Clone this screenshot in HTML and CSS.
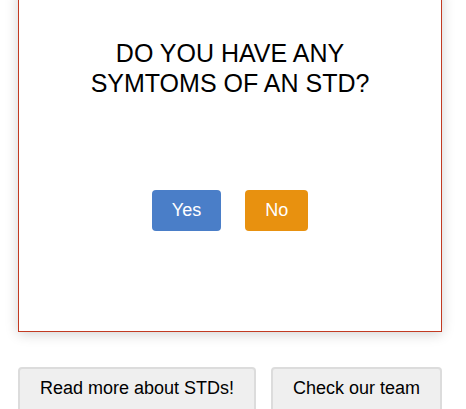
FILE: index.html
```html
<!DOCTYPE html>
<html>
<head>
<meta charset="utf-8">
<link rel="stylesheet" href="styles.css">
</head>
<body>
<div class="page">
  <div class="card">
    <h1 class="question">DO YOU HAVE ANY<br>SYMTOMS OF AN STD?</h1>
    <div class="answers">
      <button class="answer yes">Yes</button>
      <button class="answer no">No</button>
    </div>
  </div>
  <div class="links">
    <button class="link">Read more about STDs!</button>
    <button class="link">Check our team</button>
  </div>
</div>
</body>
</html>
```
FILE: styles.css
```css
html, body {
  margin: 0;
  padding: 0;
  background: #fff;
  font-family: "Liberation Sans", Arial, sans-serif;
  overflow: hidden;
}
.page {
  width: 424px;
  padding-left: 18px;
}
.card {
  margin-top: -12px;
  height: 344px;
  box-sizing: border-box;
  border: 1px solid #c23a22;
  background: #fff;
  box-shadow: 0 2px 12px rgba(0, 0, 0, 0.18);
  display: flex;
  flex-direction: column;
  align-items: center;
  padding-top: 49px;
}
.question {
  margin: 0;
  font-weight: normal;
  font-size: 25px;
  line-height: 30px;
  color: #000;
  text-align: center;
}
.answers {
  display: flex;
  gap: 24px;
  margin-top: 92px;
}
.answer {
  height: 41px;
  border: none;
  border-radius: 4px;
  color: #fff;
  font-family: "Liberation Sans", Arial, sans-serif;
  font-size: 18px;
  padding: 0 20px;
}
.yes { background: #4a7ec8; }
.no { background: #e8910f; }
.links {
  display: flex;
  justify-content: space-between;
  margin-top: 35px;
}
.link {
  height: 46px;
  padding: 0 20px 3px;
  background: #efefef;
  border: 2px solid #dcdcdc;
  border-radius: 4px;
  font-family: "Liberation Sans", Arial, sans-serif;
  font-size: 18px;
  color: #000;
}
```
